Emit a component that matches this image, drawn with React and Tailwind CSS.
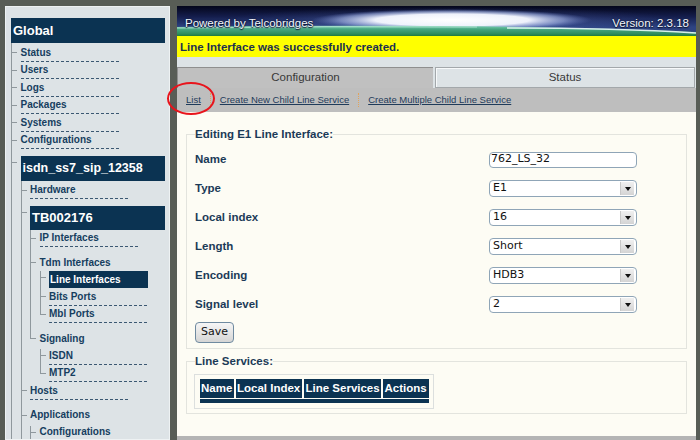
import React from "react";

const NAVY = "bg-[#0b3352]";

const GAP = {
  0: ["h-[6px]", ""],
  2: ["h-[8px]", "pt-[2px]"],
  3: ["h-[9px]", "pt-[3px]"],
  5: ["h-[11px]", "pt-[5px]"],
  7: ["h-[13px]", "pt-[7px]"],
};

function Branch({ gap = 0, last, children }) {
  const [top, pad] = GAP[gap];
  return (
    <div className="flex">
      <div className="flex flex-col w-[9.5px] shrink-0">
        <div className={`${top} border-l border-[#8f989d]`} />
        <div className="w-[6px] border-t border-l border-[#8f989d]" />
        <div className={last ? "flex-1" : "flex-1 border-l border-[#8f989d]"} />
      </div>
      <div className={`min-w-0 flex-1 ${pad}`}>{children}</div>
    </div>
  );
}

function Box({ className, children }) {
  return (
    <div className={`${NAVY} flex items-center font-bold text-white ${className}`}>
      {children}
    </div>
  );
}

function Item({ children }) {
  return (
    <div className="h-[15.5px] w-[98px] mb-[2px] border-b border-dashed border-[#3b5872] text-[10px] leading-[12px] pt-[0.5px] font-bold text-[#163e5f] whitespace-nowrap">
      {children}
    </div>
  );
}

function Label({ mb, children }) {
  return (
    <div
      className={`h-[15px] ${mb ? "mb-[2px]" : ""} text-[10px] leading-[12px] pt-[0.5px] font-bold text-[#163e5f] whitespace-nowrap`}
    >
      {children}
    </div>
  );
}

function Sidebar() {
  return (
    <div className="w-[165px] shrink-0 bg-[#dde3e6] border border-[#eef2f3] pt-[11px] pl-[5px] pr-[4px] overflow-hidden">
      <Box className="h-[25px] text-[13px] pl-[2px]">Global</Box>
      <div>
        <Branch gap={3}>
          <Item>Status</Item>
        </Branch>
        <Branch>
          <Item>Users</Item>
        </Branch>
        <Branch>
          <Item>Logs</Item>
        </Branch>
        <Branch>
          <Item>Packages</Item>
        </Branch>
        <Branch>
          <Item>Systems</Item>
        </Branch>
        <Branch>
          <Item>Configurations</Item>
        </Branch>
        <Branch gap={5}>
          <Box className="h-[24.5px] text-[12.5px] pl-[2px]">isdn_ss7_sip_12358</Box>
          <Branch gap={3}>
            <Item>Hardware</Item>
          </Branch>
          <Branch gap={5}>
            <Box className="h-[23.5px] text-[13px] pl-[2px]">TB002176</Box>
            <Branch gap={2}>
              <Item>IP Interfaces</Item>
            </Branch>
            <Branch gap={7}>
              <Label>Tdm Interfaces</Label>
              <Branch>
                <div className={`h-[17px] w-[99px] mb-[2px] ${NAVY} text-white text-[10px] leading-[17px] font-bold px-px whitespace-nowrap`}>
                  Line Interfaces
                </div>
              </Branch>
              <Branch>
                <Item>Bits Ports</Item>
              </Branch>
              <Branch last>
                <Item>Mbl Ports</Item>
              </Branch>
            </Branch>
            <Branch gap={7} last>
              <Label mb>Signaling</Label>
              <Branch>
                <Item>ISDN</Item>
              </Branch>
              <Branch last>
                <Item>MTP2</Item>
              </Branch>
            </Branch>
          </Branch>
          <Branch>
            <Item>Hosts</Item>
          </Branch>
          <Branch gap={7}>
            <Label mb>Applications</Label>
            <Branch>
              <Item>Configurations</Item>
            </Branch>
          </Branch>
        </Branch>
      </div>
    </div>
  );
}

function Banner() {
  return (
    <svg className="absolute inset-0 w-full h-full" viewBox="0 0 519 30" preserveAspectRatio="none">
      <defs>
        <linearGradient id="sky" x1="0" y1="0" x2="0" y2="1">
          <stop offset="0" stopColor="#04061a" />
          <stop offset="0.35" stopColor="#141d4c" />
          <stop offset="0.7" stopColor="#2e4382" />
          <stop offset="1" stopColor="#2e4382" />
        </linearGradient>
        <radialGradient id="glow" cx="0.5" cy="0.5" r="0.5">
          <stop offset="0" stopColor="#ffffff" stopOpacity="1" />
          <stop offset="0.55" stopColor="#f4f7ff" stopOpacity="0.97" />
          <stop offset="0.8" stopColor="#aebff0" stopOpacity="0.55" />
          <stop offset="1" stopColor="#6a80cc" stopOpacity="0" />
        </radialGradient>
        <radialGradient id="halo" cx="0.5" cy="0.5" r="0.5">
          <stop offset="0" stopColor="#8aa2e6" stopOpacity="0.45" />
          <stop offset="1" stopColor="#4a62b0" stopOpacity="0" />
        </radialGradient>
        <linearGradient id="grass" x1="0" y1="0" x2="0" y2="1">
          <stop offset="0" stopColor="#7dd2b4" />
          <stop offset="0.35" stopColor="#46a580" />
          <stop offset="0.8" stopColor="#2f8c5c" />
          <stop offset="1" stopColor="#1f7a3e" />
        </linearGradient>
      </defs>
      <rect width="519" height="30" fill="url(#sky)" />
      <ellipse cx="275" cy="14" rx="230" ry="13" fill="url(#halo)" />
      <ellipse cx="275" cy="14" rx="140" ry="11" fill="url(#glow)" />
      <path d="M0 21 Q120 19 262 20 Q400 21 519 26 L519 30 L0 30 Z" fill="url(#grass)" />
      <path d="M0 22 Q150 20 300 21" stroke="#dff8f0" strokeWidth="1" fill="none" opacity="0.6" />
      <path d="M330 22 Q440 22 519 27" stroke="#f2ffff" strokeWidth="1.4" fill="none" opacity="0.85" />
    </svg>
  );
}

function Select({ value }) {
  return (
    <div className="w-[148px] h-[17px] rounded-[4px] border border-[#8fa5b7] bg-white flex items-center pl-[3px] pr-[2px] font-['DejaVu_Sans',sans-serif] text-[11px] text-[#111]">
      <span className="flex-1">{value}</span>
      <span className="w-[14px] h-[13px] bg-[linear-gradient(#f0f0f0,#d4d4d4)] border-l border-[#c8c8c8] flex items-center justify-center">
        <svg width="6" height="4" viewBox="0 0 6 4">
          <path d="M0 0 L6 0 L3 4 Z" fill="#111" />
        </svg>
      </span>
    </div>
  );
}

function Row({ label, mb = "mb-[12px]", children }) {
  return (
    <div className={`flex items-center h-[17px] ${mb}`}>
      <div className="w-[294px] text-[11.5px] font-bold text-[#1b3a57]">{label}</div>
      {children}
    </div>
  );
}

function Main() {
  const th = `${NAVY} h-[19px] flex items-center px-[1.5px] text-white font-bold text-[11.5px] whitespace-nowrap`;
  return (
    <div className="w-[519px] shrink-0 flex flex-col">
      <div className="relative h-[30px] shrink-0">
        <Banner />
        <div className="relative flex items-center justify-between h-full pt-[4px] pl-[8px] pr-[7px] text-[11.5px] leading-[13px] text-[#f2f5fa] [text-shadow:0_1px_1px_#0a1430,0_0_2px_#0a1430]">
          <span>Powered by Telcobridges</span>
          <span>Version: 2.3.18</span>
        </div>
      </div>
      <div className="h-[21px] bg-[#ffff00] pl-[3px] pt-[1px] text-[11.5px] leading-[20px] font-bold text-[#1c3050]">
        Line Interface was successfully created.
      </div>
      <div className="h-[10px] bg-[#dde3e6]" />
      <div className="h-[21px] flex bg-[#dde3e6] gap-[2px] pr-px">
        <div className="w-[256px] bg-[#c0c0c0] border-t border-l border-[#8f8f8f] flex items-center justify-center text-[11.5px] text-[#383838]">
          Configuration
        </div>
        <div className="flex-1 bg-[#dde3e6] border border-[#a3a8ab] shadow-[inset_1px_1px_0_#f7f9fa] flex items-center justify-center text-[11.5px] text-[#383838]">
          Status
        </div>
      </div>
      <div className="h-[24px] bg-[#bebebe] flex items-center pl-[9px] text-[9.5px] text-[#1f3b5a]">
        <span className="underline">List</span>
        <span className="mx-[9px] h-[14px] border-l border-dotted border-[#e2a35a]" />
        <span className="underline">Create New Child Line Service</span>
        <span className="mx-[9px] h-[14px] border-l border-dotted border-[#e2a35a]" />
        <span className="underline">Create Multiple Child Line Service</span>
      </div>
      <div className="flex-1 bg-[#fdfcf4] px-[9px] pt-[16px]">
        <fieldset className="border border-[#e3e4de] px-[8px] pb-[5px]">
          <legend className="text-[11.5px] leading-[13px] font-bold text-[#1b3a57]">
            Editing E1 Line Interface:
          </legend>
          <div className="pt-[10px]">
            <Row label="Name">
              <div className="w-[148px] h-[16px] rounded-[4px] border border-[#8fa5b7] bg-white flex items-center pl-px font-['DejaVu_Sans',sans-serif] text-[11px] text-[#111]">
                762_LS_32
              </div>
            </Row>
            <Row label="Type">
              <Select value="E1" />
            </Row>
            <Row label="Local index">
              <Select value="16" />
            </Row>
            <Row label="Length">
              <Select value="Short" />
            </Row>
            <Row label="Encoding">
              <Select value="HDB3" />
            </Row>
            <Row label="Signal level" mb="mb-[9px]">
              <Select value="2" />
            </Row>
            <button className="block w-[39px] h-[21px] rounded-[4px] border border-[#6f8aa0] bg-[linear-gradient(#f6f6f6,#d5d5d5)] font-['DejaVu_Sans',sans-serif] text-[11px] text-[#111]">
              Save
            </button>
          </div>
        </fieldset>
        <fieldset className="mt-[6px] border border-[#e3e4de] px-[8px] pb-[4px]">
          <legend className="text-[11.5px] leading-[13px] font-bold text-[#1b3a57]">
            Line Services:
          </legend>
          <div className="mt-[6px] -ml-px w-fit border border-[#dcdfde] pt-[4px] pb-[5px] pl-[4.5px] pr-[4px]">
            <div className="flex gap-[2px]">
              <div className={`${th} w-[34px]`}>Name</div>
              <div className={`${th} w-[66.5px]`}>Local Index</div>
              <div className={`${th} w-[77px]`}>Line Services</div>
              <div className={`${th} w-[45.5px]`}>Actions</div>
            </div>
            <div className={`mt-px h-[4px] ${NAVY}`} />
          </div>
        </fieldset>
      </div>
      <div className="h-[4px] bg-[#b4b4b4]" />
    </div>
  );
}

export default function App() {
  return (
    <div className="relative w-[700px] h-[440px] overflow-hidden bg-[#585d56] flex gap-[7px] pt-[6px] pl-[5px] font-['Liberation_Sans',Arial,sans-serif]">
      <Sidebar />
      <Main />
      <div className="absolute left-[167px] top-[82px] w-[48px] h-[33px] rounded-[50%] border-2 border-[#e8141c]" />
    </div>
  );
}
